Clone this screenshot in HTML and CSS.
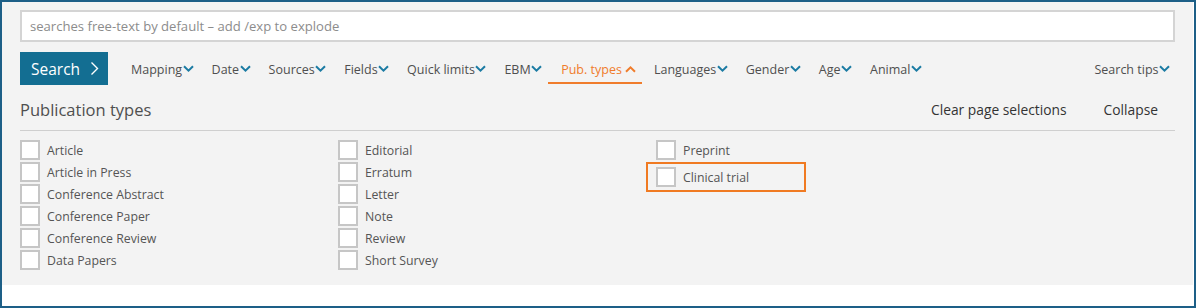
FILE: index.html
```html
<!DOCTYPE html>
<html lang="en">
<head>
    <meta charset="UTF-8">
    <title>Publication types</title>
    <link rel="stylesheet" href="styles.css">
</head>
<body>
    <div class="frame">
        <div class="panel">
            <input class="query" type="text" placeholder="searches free-text by default – add /exp to explode">

            <div class="toolbar">
                <button class="search-btn">Search
                    <svg width="9" height="15" viewBox="0 0 9 15"><path d="M1.5 1.5 L7.5 7.5 L1.5 13.5" fill="none" stroke="#fff" stroke-width="1.4"/></svg>
                </button>
                <nav class="limits">
                    <span class="limit">Mapping<svg class="chev" viewBox="0 0 11 8"><path d="M1 1.2 L5.5 5.7 L10 1.2"/></svg></span>
                    <span class="limit">Date<svg class="chev" viewBox="0 0 11 8"><path d="M1 1.2 L5.5 5.7 L10 1.2"/></svg></span>
                    <span class="limit">Sources<svg class="chev" viewBox="0 0 11 8"><path d="M1 1.2 L5.5 5.7 L10 1.2"/></svg></span>
                    <span class="limit">Fields<svg class="chev" viewBox="0 0 11 8"><path d="M1 1.2 L5.5 5.7 L10 1.2"/></svg></span>
                    <span class="limit">Quick limits<svg class="chev" viewBox="0 0 11 8"><path d="M1 1.2 L5.5 5.7 L10 1.2"/></svg></span>
                    <span class="limit">EBM<svg class="chev" viewBox="0 0 11 8"><path d="M1 1.2 L5.5 5.7 L10 1.2"/></svg></span>
                    <span class="limit active">Pub. types<svg class="chev up" viewBox="0 0 11 8"><path d="M1 6.8 L5.5 2.3 L10 6.8"/></svg></span>
                    <span class="limit">Languages<svg class="chev" viewBox="0 0 11 8"><path d="M1 1.2 L5.5 5.7 L10 1.2"/></svg></span>
                    <span class="limit">Gender<svg class="chev" viewBox="0 0 11 8"><path d="M1 1.2 L5.5 5.7 L10 1.2"/></svg></span>
                    <span class="limit">Age<svg class="chev" viewBox="0 0 11 8"><path d="M1 1.2 L5.5 5.7 L10 1.2"/></svg></span>
                    <span class="limit">Animal<svg class="chev" viewBox="0 0 11 8"><path d="M1 1.2 L5.5 5.7 L10 1.2"/></svg></span>
                </nav>
                <span class="limit tips">Search tips<svg class="chev" viewBox="0 0 11 8"><path d="M1 1.2 L5.5 5.7 L10 1.2"/></svg></span>
            </div>

            <div class="section-head">
                <h2>Publication types</h2>
                <div class="actions">
                    <span>Clear page selections</span>
                    <span>Collapse</span>
                </div>
            </div>

            <div class="types">
                <div class="col">
                    <label class="opt"><span class="box"></span>Article</label>
                    <label class="opt"><span class="box"></span>Article in Press</label>
                    <label class="opt"><span class="box"></span>Conference Abstract</label>
                    <label class="opt"><span class="box"></span>Conference Paper</label>
                    <label class="opt"><span class="box"></span>Conference Review</label>
                    <label class="opt"><span class="box"></span>Data Papers</label>
                </div>
                <div class="col">
                    <label class="opt"><span class="box"></span>Editorial</label>
                    <label class="opt"><span class="box"></span>Erratum</label>
                    <label class="opt"><span class="box"></span>Letter</label>
                    <label class="opt"><span class="box"></span>Note</label>
                    <label class="opt"><span class="box"></span>Review</label>
                    <label class="opt"><span class="box"></span>Short Survey</label>
                </div>
                <div class="col">
                    <label class="opt"><span class="box"></span>Preprint</label>
                    <div class="highlight">
                        <label class="opt"><span class="box"></span>Clinical trial</label>
                    </div>
                </div>
            </div>
        </div>
    </div>
</body>
</html>
```

FILE: styles.css
```css
body {
    margin: 0;
    font-family: 'Open Sans', 'Liberation Sans', sans-serif;
    background: #fff;
}

.frame {
    width: 1196px;
    height: 308px;
    box-sizing: border-box;
    border: 2px solid #1d5f87;
    background: #fff;
}

.panel {
    height: 283px;
    box-sizing: border-box;
    margin-right: 1px;
    padding: 8px 18px 0 18px;
    background: #f3f3f3;
}

.query {
    display: block;
    width: 1155px;
    height: 32px;
    box-sizing: border-box;
    margin: 0;
    padding: 0 8px;
    border: 2px solid #d4d4d4;
    background: #fff;
    font-family: inherit;
    font-size: 13.1px;
    outline: none;
}

.query::placeholder {
    color: #8c8c8c;
}

.toolbar {
    display: flex;
    align-items: flex-end;
    height: 33px;
    margin-top: 10px;
    width: 1155px;
}

.search-btn {
    display: flex;
    align-items: center;
    gap: 10px;
    align-self: stretch;
    width: 88px;
    padding: 0 0 0 11px;
    border: none;
    background: #136e92;
    color: #fff;
    font-family: inherit;
    font-size: 15.5px;
}

.limits {
    display: flex;
    margin-left: 11px;
    flex: 1;
}

.limit {
    display: flex;
    align-items: center;
    height: 26px;
    margin-bottom: 1px;
    padding: 0 6px 0 12px;
    border-bottom: 2px solid transparent;
    font-size: 12.5px;
    color: #4f4f4f;
}

.limit.active {
    color: #f07c2b;
    border-bottom-color: #f07c2b;
    padding-left: 13px;
}

.chev {
    width: 11px;
    height: 8px;
    margin-left: 0.5px;
    fill: none;
    stroke: #1b7ba3;
    stroke-width: 2;
}

.chev.up {
    margin-left: 3px;
    stroke: #f07c2b;
}

.tips {
    padding-right: 5px;
}

.section-head {
    display: flex;
    justify-content: space-between;
    align-items: center;
    width: 1155px;
    height: 46px;
    padding-top: 4px;
    border-bottom: 1px solid #cfcfcf;
    box-sizing: border-box;
}

.section-head h2 {
    margin: 0;
    font-size: 16.5px;
    font-weight: normal;
    color: #4f4f4f;
}

.actions {
    display: flex;
    gap: 37px;
    padding-right: 17px;
    font-size: 13.8px;
    color: #333;
}

.types {
    display: grid;
    grid-template-columns: 318px 318px 318px;
    margin-top: 8px;
}

.col {
    display: flex;
    flex-direction: column;
}

.opt {
    display: flex;
    align-items: center;
    height: 22px;
    font-size: 12.3px;
    color: #555;
}

.box {
    width: 20px;
    height: 20px;
    box-sizing: border-box;
    margin-right: 7px;
    border: 2px solid #c6c6c6;
    background: #fff;
}

.highlight {
    width: 160px;
    height: 30px;
    box-sizing: border-box;
    margin: 1px 0 0 -10px;
    padding: 2px 0 0 8px;
    border: 2px solid #f07a22;
}
```
